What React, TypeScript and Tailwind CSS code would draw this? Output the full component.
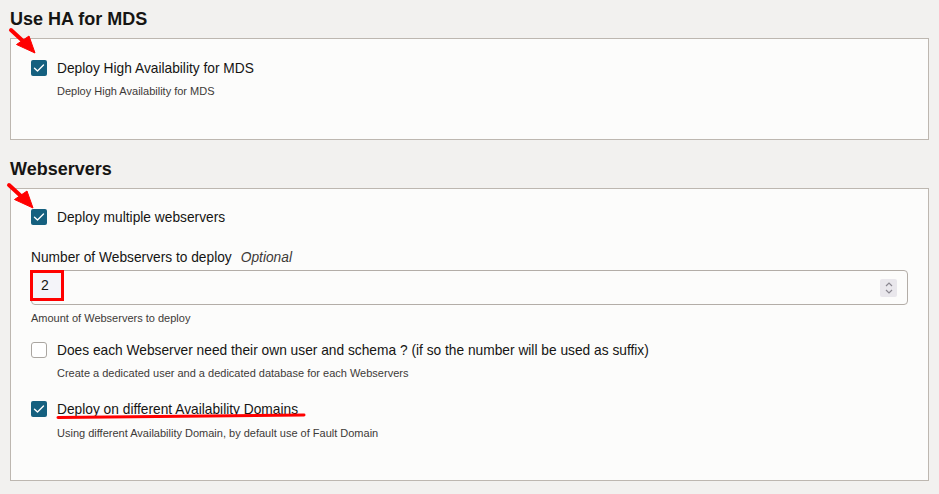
import React from "react";

function Check({ checked }: { checked: boolean }) {
  if (!checked) {
    return <div className="w-[16px] h-[16px] rounded-[3px] border border-[#aaa6a1] bg-white shrink-0" />;
  }
  return (
    <div className="w-[16px] h-[16px] rounded-[2px] bg-[#15607f] shrink-0 flex items-center justify-center">
      <svg width="12" height="10" viewBox="0 0 12 10">
        <path d="M1.5 5.2 L4.5 8 L10.5 2" fill="none" stroke="white" strokeWidth="1.4" strokeLinecap="round" strokeLinejoin="round" />
      </svg>
    </div>
  );
}

function Row({ checked, label }: { checked: boolean; label: string }) {
  return (
    <div className="flex items-center gap-[10px] h-[16px]">
      <Check checked={checked} />
      <span className="relative top-[1px] text-[13.75px] leading-[18px] text-[#161513]">{label}</span>
    </div>
  );
}

function Help({ children, indent = true, mt }: { children: React.ReactNode; indent?: boolean; mt: string }) {
  return (
    <div className={`${indent ? "pl-[26px]" : ""} ${mt} text-[11px] leading-[14px] text-[#3c3a38]`}>{children}</div>
  );
}

export default function App() {
  return (
    <div
      className="relative min-h-screen bg-[#f2f1ef] px-[10px] pt-[8px] pb-[20px]"
      style={{ fontFamily: '"Liberation Sans", Arial, sans-serif' }}
    >
      <h2 className="text-[18px] leading-[22px] font-bold text-[#161513] mb-[8px]">Use HA for MDS</h2>
      <div className="h-[102px] border border-[#bdb7b0] bg-[#fcfcfb] px-[20px] pt-[21px]">
        <Row checked label="Deploy High Availability for MDS" />
        <Help mt="mt-[8px]">Deploy High Availability for MDS</Help>
      </div>

      <h2 className="mt-[18px] text-[18px] leading-[22px] font-bold text-[#161513] mb-[8px]">Webservers</h2>
      <div className="h-[293px] border border-[#bdb7b0] bg-[#fcfcfb] px-[20px] pt-[20px]">
        <Row checked label="Deploy multiple webservers" />
        <div className="mt-[24px] flex items-center gap-[9px] text-[13.75px] leading-[18px] text-[#161513]">
          <span>Number of Webservers to deploy</span>
          <span className="italic text-[#3c3a38]">Optional</span>
        </div>
        <div className="relative mt-[3px] h-[35px] rounded-[4px] border border-[#b3ada7] bg-[#fcfcfb] flex items-center">
          <div className="absolute left-[-2px] top-[-1px] w-[34px] h-[31px] border-[3px] border-[#ff0000] bg-[#f4f4f9] flex items-center pl-[8px]">
            <span className="text-[14px] text-[#161513]">2</span>
          </div>
          <div className="ml-auto mr-[10px] w-[17px] h-[18px] rounded-[2px] bg-[#e9e7ec] flex items-center justify-center">
            <svg width="10" height="14" viewBox="0 0 10 14">
              <path d="M2 5 L5 2 L8 5" fill="none" stroke="#8a8790" strokeWidth="1.2" />
              <path d="M2 9 L5 12 L8 9" fill="none" stroke="#8a8790" strokeWidth="1.2" />
            </svg>
          </div>
        </div>
        <Help indent={false} mt="mt-[6px]">Amount of Webservers to deploy</Help>
        <div className="mt-[17px]">
          <Row checked={false} label="Does each Webserver need their own user and schema ? (if so the number will be used as suffix)" />
        </div>
        <Help mt="mt-[8px]">Create a dedicated user and a dedicated database for each Webservers</Help>
        <div className="mt-[21px]">
          <Row checked label="Deploy on different Availability Domains" />
        </div>
        <Help mt="mt-[9px]">Using different Availability Domain, by default use of Fault Domain</Help>
      </div>

      <svg className="absolute left-0 top-0 pointer-events-none" width="939" height="494" viewBox="0 0 939 494">
        <g fill="#ff0000" stroke="#ff0000">
          <line x1="11" y1="30" x2="24" y2="42" strokeWidth="4" strokeLinecap="round" />
          <polygon points="35,53 16.5,44.5 29,36" strokeWidth="1" strokeLinejoin="round" />
          <g transform="translate(-2 155)">
            <line x1="11" y1="30" x2="24" y2="42" strokeWidth="4" strokeLinecap="round" />
            <polygon points="35,53 16.5,44.5 29,36" strokeWidth="1" strokeLinejoin="round" />
          </g>
        </g>
        <path d="M58 417.5 Q180 416 304 415" fill="none" stroke="#ff0000" strokeWidth="3" strokeLinecap="round" />
      </svg>
    </div>
  );
}
